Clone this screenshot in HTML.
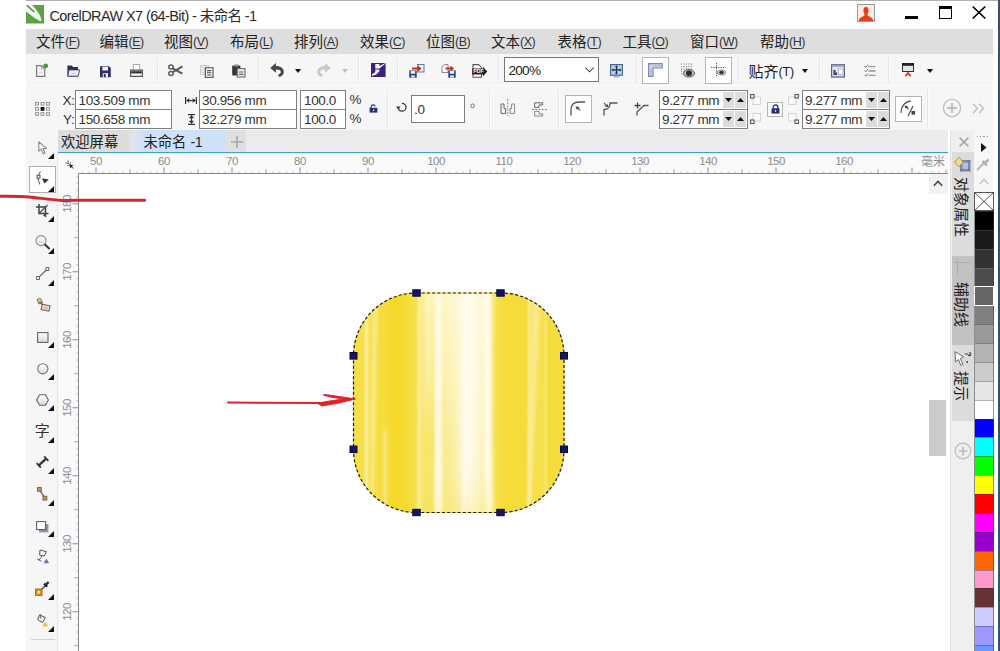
<!DOCTYPE html>
<html lang="zh"><head><meta charset="utf-8"><title>CorelDRAW X7 (64-Bit) - 未命名 -1</title>
<style>
html,body{margin:0;padding:0;}
body{width:1000px;height:651px;overflow:hidden;background:#fff;position:relative;font-family:"Liberation Sans","Noto Sans CJK SC",sans-serif;color:#1a1a1a;}
.a{position:absolute;}
.t{position:absolute;white-space:nowrap;line-height:1;}
svg{position:absolute;overflow:visible;}
.m{top:34.5px;font-size:14.5px;color:#222;}
.m i{font-style:normal;font-size:12.5px;position:relative;top:-1px;letter-spacing:-0.45px;color:#333;}
.m u{text-decoration-thickness:1px;text-underline-offset:1.5px;}
.box{position:absolute;background:#fff;border:1px solid #7f7f7f;box-sizing:border-box;}
.v{font-size:13.5px;color:#333;letter-spacing:-0.35px;}
.sep{position:absolute;width:1px;background:#e6e6e6;border-right:1px solid #fcfcfc;}
.sel{position:absolute;background:#fff;border:1px solid #b4b4b4;box-sizing:border-box;}
.spin{position:absolute;background:#dcdcdc;}
.fly{position:absolute;width:0;height:0;border-left:6.5px solid transparent;border-bottom:6.5px solid #111;}
.rl{font-size:11.5px;color:#8c8c8c;letter-spacing:-0.5px;}
.vl{font-size:11.5px;color:#8c8c8c;letter-spacing:-0.5px;transform:rotate(-90deg);transform-origin:0 0;}
.dk{font-size:15px;color:#222;writing-mode:vertical-rl;text-orientation:sideways;}
</style></head><body>
<div class="a" style="left:26px;top:0;width:973px;height:1px;background:#b0b0b0"></div>
<div class="a" style="left:26px;top:29px;width:967px;height:25px;background:#dedede"></div>
<div class="a" style="left:26px;top:54px;width:967px;height:77px;background:#f6f6f6"></div>
<div class="a" style="left:26px;top:85px;width:967px;height:1px;background:#fcfcfc"></div>
<div class="a" style="left:26px;top:130px;width:32px;height:521px;background:#f6f6f6"></div>
<div class="a" style="left:58px;top:130px;width:890px;height:22px;background:#ebebeb"></div>
<div class="a" style="left:948px;top:130px;width:45px;height:521px;background:#efefef"></div>
<div class="a" style="left:998.3px;top:0;width:1.7px;height:651px;background:linear-gradient(180deg,#414e62 0,#34526c 200px,#2f566e 100%)"></div>
<svg style="left:26px;top:5px" width="18" height="18.5" viewBox="0 0 18 18.5"><rect width="18" height="18.5" fill="#5ba241"/><path d="M0 0 L6.2 0 L10 4.5 L14 10.5 L15.6 15.2 L14.2 16.2 L8 12.5 L0 6.4Z" fill="#f4fbf0"/><path d="M1.2 0.6 L8 6.8" stroke="#5d7a4c" stroke-width="1.4" stroke-linecap="round"/></svg>
<div class="t" style="left:49.5px;top:8.5px;font-size:14.5px;letter-spacing:-0.6px;color:#2a2a2a">CorelDRAW X7 (64-Bit) - 未命名 -1</div>
<svg style="left:857px;top:4px" width="18" height="18" viewBox="0 0 18 18"><rect x="0.5" y="0.5" width="17" height="17" fill="#fbe9e4" stroke="#9a9a9a"/><ellipse cx="9" cy="6.4" rx="2.6" ry="3.4" fill="#e2401c"/><path d="M1.5 17 C2.5 13 5.8 12.8 7.4 11.4 L7.4 8.5 L10.6 8.5 L10.6 11.4 C12.2 12.8 15.5 13 16.5 17Z" fill="#e2401c"/></svg>
<div class="a" style="left:904.5px;top:15.5px;width:13px;height:3px;background:#000"></div>
<div class="a" style="left:939px;top:6px;width:12.5px;height:12.5px;border:1px solid #000;border-top:3px solid #000;box-sizing:border-box"></div>
<svg style="left:972px;top:6px" width="14" height="13" viewBox="0 0 14 13"><path d="M0.7 0.5 L13.3 12.5 M13.3 0.5 L0.7 12.5" stroke="#000" stroke-width="1.7"/></svg>
<div class="t m" style="left:36px">文件<i>(<u>F</u>)</i></div>
<div class="t m" style="left:99.5px">编辑<i>(<u>E</u>)</i></div>
<div class="t m" style="left:164px">视图<i>(<u>V</u>)</i></div>
<div class="t m" style="left:230px">布局<i>(<u>L</u>)</i></div>
<div class="t m" style="left:294px">排列<i>(<u>A</u>)</i></div>
<div class="t m" style="left:360px">效果<i>(<u>C</u>)</i></div>
<div class="t m" style="left:426px">位图<i>(<u>B</u>)</i></div>
<div class="t m" style="left:491px">文本<i>(<u>X</u>)</i></div>
<div class="t m" style="left:557.5px">表格<i>(<u>T</u>)</i></div>
<div class="t m" style="left:622.5px">工具<i>(<u>O</u>)</i></div>
<div class="t m" style="left:690px">窗口<i>(<u>W</u>)</i></div>
<div class="t m" style="left:760px">帮助<i>(<u>H</u>)</i></div>
<!-- standard toolbar -->
<svg style="left:36px;top:63px" width="13" height="14" viewBox="0 0 13 14"><path d="M0.6 2.6 L5.6 2.6 L8.8 5.6 L8.8 13.4 L0.6 13.4Z" fill="#f8f8f8" stroke="#7a7a7a" stroke-width="1.2"/><path d="M5.4 2.8 L5.4 5.8 L8.6 5.8" fill="none" stroke="#9a9a9a" stroke-width="0.9"/><path d="M2.4 9.8 H6.8" stroke="#c8c8c8" stroke-width="0.9"/><circle cx="9.7" cy="2.8" r="2.4" fill="#3f9a3a"/></svg>
<svg style="left:67px;top:65px" width="13" height="12" viewBox="0 0 13 12"><path d="M0.4 0.4 L4.8 0.4 L6 1.9 L11 1.9 L11 11.4 L0.4 11.4Z" fill="#2a3052"/><path d="M2 4.9 L12.7 4.9 L11 11.2 L0.8 11.2Z" fill="#eceef2" stroke="#3a3f58" stroke-width="0.9"/><path d="M4 8.4 H9" stroke="#c4c8d2" stroke-width="0.9"/></svg>
<svg style="left:100px;top:65.5px" width="11" height="11.5" viewBox="0 0 11 11.5"><path d="M0 0.3 L9 0.3 L10.8 2 L10.8 11.2 L0 11.2Z" fill="#2c315e"/><rect x="2.4" y="0.8" width="5.6" height="3.7" fill="#f4f5fa"/><rect x="2.8" y="7.2" width="5.2" height="4" fill="#f4f5fa"/><rect x="3.8" y="8" width="1.9" height="3.2" fill="#2c315e"/></svg>
<svg style="left:130px;top:64px" width="13" height="13" viewBox="0 0 13 13"><rect x="3.3" y="0.5" width="6.4" height="6.5" fill="#fff" stroke="#a2a2a2" stroke-width="0.9"/><path d="M0.6 6.2 L12.4 6.2 L12.4 12.4 L0.6 12.4Z" fill="#f6f6f6" stroke="#555" stroke-width="1.2"/><rect x="1.2" y="7.2" width="10.6" height="2.2" fill="#2e2e2e"/></svg>
<div class="sep" style="left:157px;top:57px;height:26px"></div>
<svg style="left:168px;top:63.5px" width="15" height="12.5" viewBox="0 0 15 12.5"><ellipse cx="3" cy="3" rx="2.2" ry="2" fill="none" stroke="#5a5a5a" stroke-width="1.5"/><ellipse cx="3" cy="9.4" rx="2.2" ry="2" fill="none" stroke="#5a5a5a" stroke-width="1.5"/><path d="M4.6 4.3 L14.4 9.6 M4.6 8.2 L14.4 2.4" stroke="#555" stroke-width="1.9"/></svg>
<svg style="left:200px;top:64.5px" width="14" height="13" viewBox="0 0 14 13"><rect x="0.7" y="0.6" width="7.6" height="8.6" fill="#f7f7f7" stroke="#bdbdbd" stroke-width="0.9"/><path d="M2 2.8 H7 M2 5 H5 M2 7.2 H5" stroke="#c8c8c8" stroke-width="0.9"/><rect x="5.4" y="2.8" width="7.6" height="9.6" fill="#fff" stroke="#5a5a5a" stroke-width="1.2"/><path d="M7 5.6 H11.4 M7 7.8 H11.4 M7 10 H11.4" stroke="#4a4a4a" stroke-width="1.1"/></svg>
<svg style="left:232px;top:64px" width="14" height="14" viewBox="0 0 14 14"><rect x="0.2" y="1.6" width="8.2" height="10" rx="0.8" fill="#3b3331"/><rect x="2" y="0.4" width="4.6" height="2.4" rx="0.8" fill="#8d8682"/><rect x="5.2" y="4.6" width="7.8" height="8.4" fill="#ececf0" stroke="#6a6a6a" stroke-width="1.1"/><path d="M6.8 8 H11.4 M6.8 10.4 H11.4" stroke="#666" stroke-width="1.1"/></svg>
<div class="sep" style="left:258px;top:57px;height:26px"></div>
<svg style="left:270.3px;top:63px" width="14" height="14" viewBox="0 0 14 14"><path d="M0.2 4.9 L5.9 0 L5.9 2.9 C11 2.9 13.8 5.6 13.8 9 C13.8 11.6 12 13.4 9 14 L8 11.6 C10 11.2 10.8 10.2 10.8 9 C10.8 7.4 9.2 6.6 5.9 6.6 L5.9 9.8Z" fill="#474747"/></svg>
<svg style="left:295px;top:69px" width="6" height="4" viewBox="0 0 6 4"><path d="M0 0 H6 L3 4Z" fill="#111"/></svg>
<svg style="left:316.8px;top:63px" width="14" height="14" viewBox="0 0 14 14"><path d="M13.8 4.9 L8.1 0 L8.1 2.9 C3 2.9 0.2 5.6 0.2 9 C0.2 11.6 2 13.4 5 14 L6 11.6 C4 11.2 3.2 10.2 3.2 9 C3.2 7.4 4.8 6.6 8.1 6.6 L8.1 9.8Z" fill="#c8c8c8"/></svg>
<svg style="left:342px;top:69px" width="6" height="4" viewBox="0 0 6 4"><path d="M0 0 H6 L3 4Z" fill="#bdbdbd"/></svg>
<div class="sep" style="left:358px;top:57px;height:26px"></div>
<svg style="left:370.6px;top:62.8px" width="14.6" height="14" viewBox="0 0 14.6 14"><rect width="14.6" height="14" fill="#35237f"/><path d="M4.3 1 L8.4 1 L8.4 3.2 L13.6 0.2 L14.4 0.6 L8.4 5.4 L4.3 5.4Z" fill="#fbf8ff"/><path d="M4.3 6.4 L8.4 6.4 L8.4 8.2 L5.4 11.6 L1 12.9 L0.8 11.4 L4.3 9Z" fill="#f3eeff"/></svg>
<div class="sep" style="left:397px;top:57px;height:26px"></div>
<svg style="left:408.5px;top:63.5px" width="16" height="14" viewBox="0 0 16 14"><rect x="8.5" y="0.5" width="6.5" height="7.5" fill="#eef3f6" stroke="#4d7f9a" stroke-width="1"/><path d="M3 3.6 H9 L9 1.6 L12.5 4.5 L9 7.4 L9 5.4 H3Z" fill="#cc2b22"/><rect x="0.3" y="6.5" width="7.4" height="7.2" fill="#24406e"/><rect x="1.8" y="7" width="4.4" height="2.8" fill="#eef1f6"/><rect x="2" y="11.3" width="4" height="2.4" fill="#cfd6e4"/></svg>
<svg style="left:440.5px;top:63.5px" width="15" height="14" viewBox="0 0 15 14"><path d="M1 2.5 L3.5 0.5 L7 0.5 L7 8.5 L1 8.5Z" fill="#fbfbfb" stroke="#8a8a8a" stroke-width="1"/><path d="M4.5 3.6 H9.5 L9.5 1.6 L13 4.5 L9.5 7.4 L9.5 5.4 H4.5Z" fill="#cc2b22"/><rect x="7.3" y="6.5" width="7.4" height="7.2" fill="#24406e"/><rect x="8.8" y="7" width="4.4" height="2.8" fill="#eef1f6"/><rect x="9" y="11.3" width="4" height="2.4" fill="#cfd6e4"/></svg>
<svg style="left:472px;top:63.5px" width="16" height="14" viewBox="0 0 16 14"><path d="M1 0.6 L6.5 0.6 L9.5 3.4 L9.5 13.2 L1 13.2Z" fill="#fff" stroke="#555" stroke-width="1.1"/><path d="M0.2 4.6 H11 L11 2.8 L15.3 7.5 L11 12.2 L11 10.4 H0.2Z" fill="#222"/><text x="1.2" y="9.4" font-size="5.2" font-weight="bold" fill="#fff" font-family="Liberation Sans, sans-serif">PDF</text></svg>
<div class="sep" style="left:498px;top:57px;height:26px"></div>
<div class="box" style="left:504px;top:57px;width:95px;height:24.5px;border-color:#767676"></div>
<div class="t" style="left:508.5px;top:63.5px;font-size:13.6px;letter-spacing:-0.75px;color:#222">200%</div>
<svg style="left:585px;top:67px" width="9" height="6" viewBox="0 0 9 6"><path d="M0.4 0.7 L4.5 4.8 L8.6 0.7" fill="none" stroke="#444" stroke-width="1.1"/></svg>
<svg style="left:610px;top:63.5px" width="13" height="14" viewBox="0 0 13 14"><rect x="0.6" y="0.6" width="11.8" height="10.6" fill="#b9d2ea" stroke="#3b5f8a" stroke-width="1.1"/><path d="M2.3 5.9 H10.7 M6.5 2 V9.8" stroke="#1c2d4a" stroke-width="1.3"/><path d="M6.5 1.2 L8 3 H5Z M6.5 10.6 L8 8.8 H5Z M1.6 5.9 L3.4 4.4 V7.4Z M11.4 5.9 L9.6 4.4 V7.4Z" fill="#1c2d4a"/><rect x="3.5" y="12" width="6" height="1.4" fill="#9db4cc"/></svg>
<div class="sep" style="left:636px;top:57px;height:26px"></div>
<div class="sel" style="left:642px;top:57px;width:27px;height:27px"></div>
<svg style="left:648px;top:63px" width="15" height="14" viewBox="0 0 15 14"><path d="M0.6 0.6 H14.2 V5 H5 V13.4 H0.6Z" fill="#c9d3e6" stroke="#7a86a8" stroke-width="1.1"/><path d="M6 2 V3.4 M8 2 V3.4 M10 2 V3.4 M12 2 V3.4 M2 6.5 H3.4 M2 8.5 H3.4 M2 10.5 H3.4" stroke="#8d98b6" stroke-width="0.7"/></svg>
<svg style="left:680px;top:63px" width="15" height="15" viewBox="0 0 15 15"><path d="M1 1 H12 M1 3.5 H12 M1 6 H12 M1 8.5 H5 M1 11 H4" stroke="#9a9a9a" stroke-width="0.9" stroke-dasharray="1 1.4"/><path d="M1.5 0.5 V12 M4 0.5 V12 M6.5 0.5 V7 M9 0.5 V7 M11.5 0.5 V7" stroke="#9a9a9a" stroke-width="0.9" stroke-dasharray="1 1.4"/><ellipse cx="9" cy="10.3" rx="5.5" ry="3.7" fill="#c4c4c4" stroke="#555" stroke-width="1"/><ellipse cx="9" cy="10.3" rx="3" ry="2.7" fill="#2a2a2a"/></svg>
<div class="sel" style="left:705px;top:57px;width:27px;height:27px"></div>
<svg style="left:711px;top:63px" width="16" height="15" viewBox="0 0 16 15"><path d="M0 4.5 H15 M5.5 0 V14" stroke="#555" stroke-width="1" stroke-dasharray="1.3 1.1"/><ellipse cx="10.5" cy="9.5" rx="4.2" ry="2.5" fill="#cfcfcf" stroke="#666" stroke-width="0.8"/><ellipse cx="10.5" cy="9.5" rx="2.2" ry="1.7" fill="#333"/></svg>
<div class="sep" style="left:738px;top:57px;height:26px"></div>
<div class="t" style="left:748.5px;top:63.5px;font-size:15px;color:#1c1c1c">贴齐<span style="font-size:12.5px;position:relative;top:-1px;letter-spacing:-0.2px">(T)</span></div>
<svg style="left:802px;top:69px" width="6" height="4" viewBox="0 0 6 4"><path d="M0 0 H6 L3 4Z" fill="#111"/></svg>
<div class="sep" style="left:819px;top:57px;height:26px"></div>
<svg style="left:831px;top:63.5px" width="14" height="14" viewBox="0 0 14 14"><rect x="0.6" y="0.6" width="12.8" height="12.4" fill="#dfe3ee" stroke="#5a5f86" stroke-width="1.2"/><rect x="0.6" y="0.6" width="12.8" height="2.2" fill="#9aa0bd"/><path d="M2.5 11 V6 H4.5 V8.5 H6 V11Z" fill="#3a3f78"/><rect x="7.5" y="5" width="4.5" height="5.5" fill="#fff" stroke="#9aa0bd" stroke-width="0.7"/></svg>
<svg style="left:864px;top:63.5px" width="12" height="13" viewBox="0 0 12 13"><path d="M0.5 2 L1.8 3.4 L4 0.6 M0.5 6.4 L1.8 7.8 L4 5 M0.5 10.8 L1.8 12.2 L4 9.4" fill="none" stroke="#777" stroke-width="1"/><path d="M4.5 2.6 H11.5 M4.5 7 H11.5 M4.5 11.4 H11.5" stroke="#999" stroke-width="1.4"/></svg>
<div class="sep" style="left:888px;top:57px;height:26px"></div>
<svg style="left:902px;top:63px" width="12" height="14" viewBox="0 0 12 14"><rect x="0.5" y="0.5" width="11" height="8" fill="#e3e4ee" stroke="#333" stroke-width="1"/><rect x="0" y="0" width="12" height="2.8" fill="#222"/><path d="M6 8.4 L9.6 13.2 L7.6 13.2 L6 11.4 L4.4 13.2 L2.4 13.2Z" fill="#d5341f"/></svg>
<svg style="left:927px;top:69px" width="6" height="4" viewBox="0 0 6 4"><path d="M0 0 H6 L3 4Z" fill="#111"/></svg>
<!-- property bar -->
<svg style="left:35px;top:102px" width="15" height="14" viewBox="0 0 15 14"><g fill="#f6f6f6" stroke="#8c8c8c" stroke-width="0.9"><rect x="0.5" y="0.5" width="3" height="2.6"/><rect x="6" y="0.5" width="3" height="2.6"/><rect x="11.5" y="0.5" width="3" height="2.6"/><rect x="0.5" y="5.6" width="3" height="2.6"/><rect x="11.5" y="5.6" width="3" height="2.6"/><rect x="0.5" y="10.7" width="3" height="2.6"/><rect x="6" y="10.7" width="3" height="2.6"/><rect x="11.5" y="10.7" width="3" height="2.6"/></g><rect x="5.6" y="5" width="3.8" height="3.8" fill="#111"/></svg>
<div class="t v" style="left:62.5px;top:94px">X:</div>
<div class="t v" style="left:63px;top:113px">Y:</div>
<div class="box" style="left:75px;top:90px;width:97px;height:20px"></div>
<div class="box" style="left:75px;top:109px;width:97px;height:20px"></div>
<div class="t v" style="left:78.5px;top:94px">103.509 mm</div>
<div class="t v" style="left:78.5px;top:113px">150.658 mm</div>
<svg style="left:185px;top:97px" width="12" height="7" viewBox="0 0 12 7"><path d="M0.6 0 V7 M11.4 0 V7" stroke="#333" stroke-width="1.2"/><path d="M1.5 3.5 H10.5" stroke="#333" stroke-width="1.1"/><path d="M1.3 3.5 L4.3 1 V6Z M10.7 3.5 L7.7 1 V6Z" fill="#333"/></svg>
<svg style="left:188px;top:114px" width="7" height="11" viewBox="0 0 7 11"><path d="M0 0.6 H7 M0 10.4 H7" stroke="#333" stroke-width="1.2"/><path d="M3.5 1.5 V9.5" stroke="#333" stroke-width="1.1"/><path d="M3.5 1.2 L6.2 4.2 H0.8Z M3.5 9.8 L6.2 6.8 H0.8Z" fill="#333"/></svg>
<div class="box" style="left:199px;top:90px;width:97.5px;height:20px"></div>
<div class="box" style="left:199px;top:109px;width:97.5px;height:20px"></div>
<div class="t v" style="left:202px;top:94px">30.956 mm</div>
<div class="t v" style="left:202px;top:113px">32.279 mm</div>
<div class="box" style="left:300px;top:90px;width:46px;height:20px"></div>
<div class="box" style="left:300px;top:109px;width:46px;height:20px"></div>
<div class="t v" style="left:304px;top:94px">100.0</div>
<div class="t v" style="left:304px;top:113px">100.0</div>
<div class="t v" style="left:349.5px;top:93px;font-size:13.5px;letter-spacing:0;color:#333">%</div>
<div class="t v" style="left:349.5px;top:112px;font-size:13.5px;letter-spacing:0;color:#333">%</div>
<svg style="left:369px;top:104px" width="9" height="9" viewBox="0 0 9 9"><path d="M2.2 4 V2.4 C2.2 0.4 6 0.4 6 2.4" fill="none" stroke="#2b2f77" stroke-width="1.2"/><rect x="0.6" y="3.8" width="7.8" height="4.8" fill="#2b2f77"/><rect x="4" y="5.2" width="1.2" height="2" fill="#c8cbe6"/></svg>
<div class="sep" style="left:387px;top:90px;height:38px"></div>
<svg style="left:396px;top:102px" width="11" height="11" viewBox="0 0 11 11"><path d="M2.2 5.6 A3.9 3.9 0 1 0 6 1.4" fill="none" stroke="#333" stroke-width="1.3"/><path d="M0 4.4 L4.6 4.4 L2.3 7.4Z" fill="#333"/></svg>
<div class="box" style="left:411px;top:95px;width:54px;height:27.5px"></div>
<div class="t v" style="left:414px;top:102.5px">.0</div>
<svg style="left:470px;top:103px" width="6" height="6" viewBox="0 0 6 6"><circle cx="2.6" cy="2.8" r="1.9" fill="none" stroke="#666" stroke-width="0.9"/></svg>
<div class="sep" style="left:488.5px;top:90px;height:38px"></div>
<svg style="left:500px;top:99px" width="16" height="17" viewBox="0 0 16 17"><path d="M7.8 0 V17" stroke="#777" stroke-width="0.9" stroke-dasharray="2 1.2"/><path d="M1 14.4 V5 H4 V9.5 H5.6 V14.4Z" fill="#f4f4f4" stroke="#666" stroke-width="1"/><path d="M14.6 14.4 V5 H11.6 V9.5 H10 V14.4Z" fill="#f4f4f4" stroke="#888" stroke-width="1"/></svg>
<svg style="left:531.5px;top:102px" width="16" height="15" viewBox="0 0 16 15"><path d="M0 7.5 H16" stroke="#777" stroke-width="0.9" stroke-dasharray="2 1.2"/><path d="M2.6 5.4 V0.8 H10.6 V3 H7 V5.4Z" fill="#f4f4f4" stroke="#666" stroke-width="1"/><path d="M2.6 9.4 V14 H10.6 V11.8 H7 V9.4Z" fill="#f4f4f4" stroke="#888" stroke-width="1"/></svg>
<div class="sep" style="left:558px;top:90px;height:38px"></div>
<div class="sel" style="left:564.5px;top:95px;width:27.5px;height:27.5px"></div>
<svg style="left:570px;top:101px" width="16" height="15" viewBox="0 0 16 15"><path d="M1 14.5 V9 C1 4 4 1 9 1 H15" fill="none" stroke="#555" stroke-width="1.3"/><path d="M5.5 5.5 L9.5 6 L8.6 7 L10.6 9 L9.8 9.8 L7.8 7.8 L6.8 8.8Z" fill="#444"/></svg>
<svg style="left:603px;top:101px" width="15" height="15" viewBox="0 0 15 15"><path d="M1 14.5 V8.5 C5 8.5 7 6 7 2 H14.5" fill="none" stroke="#555" stroke-width="1.3"/><path d="M5.6 6.2 L1.8 5.6 L2.7 4.7 L0.6 2.6 L1.4 1.8 L3.5 3.9 L4.4 3Z" fill="#444"/></svg>
<svg style="left:634px;top:101px" width="15" height="15" viewBox="0 0 15 15"><path d="M3 14.5 V11 L10 4.5 H14.5" fill="none" stroke="#555" stroke-width="1.3"/><path d="M0.5 4.5 H6.5 M3.5 1.5 V7.5" stroke="#444" stroke-width="1.3"/></svg>
<div class="box" style="left:659px;top:90px;width:88.5px;height:20px"></div>
<div class="box" style="left:659px;top:109px;width:88.5px;height:20px"></div>
<div class="t v" style="left:662px;top:94px">9.277 mm</div>
<div class="t v" style="left:662px;top:113px">9.277 mm</div>
<div class="spin" style="left:723px;top:92px;width:10.5px;height:16px"></div><div class="spin" style="left:735px;top:92px;width:10.5px;height:16px"></div>
<div class="spin" style="left:723px;top:111px;width:10.5px;height:16px"></div><div class="spin" style="left:735px;top:111px;width:10.5px;height:16px"></div>
<svg style="left:725px;top:98px" width="7" height="4" viewBox="0 0 7 4"><path d="M0 0 H7 L3.5 4Z" fill="#111"/></svg><svg style="left:737px;top:98px" width="7" height="4" viewBox="0 0 7 4"><path d="M0 4 H7 L3.5 0Z" fill="#111"/></svg>
<svg style="left:725px;top:117px" width="7" height="4" viewBox="0 0 7 4"><path d="M0 0 H7 L3.5 4Z" fill="#111"/></svg><svg style="left:737px;top:117px" width="7" height="4" viewBox="0 0 7 4"><path d="M0 4 H7 L3.5 0Z" fill="#111"/></svg>
<svg style="left:750px;top:94px" width="11" height="11" viewBox="0 0 11 11"><rect x="3" y="3" width="7.5" height="7.5" fill="#fafafa" stroke="#cfcfcf" stroke-width="0.9"/><rect x="0.6" y="0.6" width="3.4" height="3.4" fill="#fff" stroke="#444" stroke-width="1"/></svg>
<svg style="left:750px;top:113px" width="11" height="11" viewBox="0 0 11 11"><rect x="3" y="0.5" width="7.5" height="7.5" fill="#fafafa" stroke="#cfcfcf" stroke-width="0.9"/><rect x="0.6" y="7" width="3.4" height="3.4" fill="#fff" stroke="#444" stroke-width="1"/></svg>
<div class="sel" style="left:767px;top:101.5px;width:16px;height:15px"></div>
<svg style="left:770.5px;top:104px" width="9" height="10" viewBox="0 0 9 10"><path d="M2.2 4.4 V2.8 C2.2 0.4 6.8 0.4 6.8 2.8 V4.4" fill="none" stroke="#2b2f77" stroke-width="1.3"/><rect x="0.5" y="4.2" width="8" height="5.4" fill="#2b2f77"/><rect x="4" y="5.8" width="1.1" height="2.2" fill="#c8cbe6"/></svg>
<svg style="left:788px;top:94px" width="11" height="11" viewBox="0 0 11 11"><rect x="0.5" y="3" width="7.5" height="7.5" fill="#fafafa" stroke="#cfcfcf" stroke-width="0.9"/><rect x="7" y="0.6" width="3.4" height="3.4" fill="#fff" stroke="#444" stroke-width="1"/></svg>
<svg style="left:788px;top:113px" width="11" height="11" viewBox="0 0 11 11"><rect x="0.5" y="0.5" width="7.5" height="7.5" fill="#fafafa" stroke="#cfcfcf" stroke-width="0.9"/><rect x="7" y="7" width="3.4" height="3.4" fill="#fff" stroke="#444" stroke-width="1"/></svg>
<div class="box" style="left:802px;top:90px;width:88px;height:20px"></div>
<div class="box" style="left:802px;top:109px;width:88px;height:20px"></div>
<div class="t v" style="left:805px;top:94px">9.277 mm</div>
<div class="t v" style="left:805px;top:113px">9.277 mm</div>
<div class="spin" style="left:866px;top:92px;width:10.5px;height:16px"></div><div class="spin" style="left:878px;top:92px;width:10.5px;height:16px"></div>
<div class="spin" style="left:866px;top:111px;width:10.5px;height:16px"></div><div class="spin" style="left:878px;top:111px;width:10.5px;height:16px"></div>
<svg style="left:868px;top:98px" width="7" height="4" viewBox="0 0 7 4"><path d="M0 0 H7 L3.5 4Z" fill="#111"/></svg><svg style="left:880px;top:98px" width="7" height="4" viewBox="0 0 7 4"><path d="M0 4 H7 L3.5 0Z" fill="#111"/></svg>
<svg style="left:868px;top:117px" width="7" height="4" viewBox="0 0 7 4"><path d="M0 0 H7 L3.5 4Z" fill="#111"/></svg><svg style="left:880px;top:117px" width="7" height="4" viewBox="0 0 7 4"><path d="M0 4 H7 L3.5 0Z" fill="#111"/></svg>
<div class="sel" style="left:895px;top:95.5px;width:27px;height:26.5px"></div>
<svg style="left:900px;top:100px" width="17" height="17" viewBox="0 0 17 17"><path d="M1 13 C1 6 5 1.5 11 1.2" fill="none" stroke="#555" stroke-width="1.2"/><path d="M8 16 L13 6" stroke="#555" stroke-width="1.2"/><path d="M4.5 5.5 L8 6.2 L7.2 7 L8.8 8.6 L8 9.4 L6.4 7.8 L5.6 8.6Z" fill="#333"/><rect x="11.5" y="11" width="3.6" height="3.6" fill="#444"/></svg>
<div class="sep" style="left:927px;top:90px;height:38px"></div>
<svg style="left:942px;top:98px" width="20" height="20" viewBox="0 0 20 20"><circle cx="10" cy="10" r="8.6" fill="none" stroke="#bdbdbd" stroke-width="1.3"/><path d="M5 10 H15 M10 5 V15" stroke="#bdbdbd" stroke-width="1.8"/></svg>
<svg style="left:972px;top:103px" width="13" height="11" viewBox="0 0 13 11"><path d="M1 0.8 L5.5 5.5 L1 10.2 M7 0.8 L11.5 5.5 L7 10.2" fill="none" stroke="#bdbdbd" stroke-width="1.3"/></svg>
<!-- tabs -->
<div class="a" style="left:58px;top:130px;width:69px;height:22px;background:#dcdcdc"></div>
<div class="a" style="left:127px;top:130px;width:97.5px;height:22px;background:linear-gradient(90deg,#dedede 0,#e2e4e8 6px,#cfe1f8 15px)"></div>
<div class="a" style="left:224.5px;top:130px;width:21.5px;height:22px;background:#e0e0e0"></div>
<div class="t" style="left:61px;top:135px;font-size:14.3px;color:#222">欢迎屏幕</div>
<div class="t" style="left:143.5px;top:135px;font-size:14.3px;color:#222">未命名 <span style="font-size:14.3px;letter-spacing:-0.3px">-1</span></div>
<svg style="left:230.5px;top:136px" width="12" height="12" viewBox="0 0 12 12"><path d="M0 6 H12 M6 0 V12" stroke="#a9a9a9" stroke-width="1.7"/></svg>
<div class="a" style="left:58px;top:151.5px;width:890px;height:1.6px;background:#3fa4b8"></div>
<div class="a" style="left:58px;top:153.1px;width:890px;height:1px;background:#def4f6"></div>
<!-- rulers -->
<div class="a" style="left:58px;top:154px;width:890px;height:19px;background:#fafafa"></div>
<div class="a" style="left:58px;top:173px;width:21px;height:478px;background:#fafafa"></div>
<div class="a" style="left:57px;top:153px;width:1px;height:498px;background:#e6e6e6"></div>
<svg style="left:79px;top:153.5px" width="869" height="20" viewBox="79 153.5 869 20"><defs><pattern id="ht" x="95.5" y="153.5" width="68" height="20" patternUnits="userSpaceOnUse"><path d="M0.5 13.5 V20" stroke="#8c8c8c" stroke-width="1"/><path d="M34.5 15.5 V20" stroke="#9c9c9c" stroke-width="1"/><path d="M7.3 17.5 V20" stroke="#b8b8b8" stroke-width="1"/><path d="M14.1 17.5 V20" stroke="#b8b8b8" stroke-width="1"/><path d="M20.9 17.5 V20" stroke="#b8b8b8" stroke-width="1"/><path d="M27.7 17.5 V20" stroke="#b8b8b8" stroke-width="1"/><path d="M41.3 17.5 V20" stroke="#b8b8b8" stroke-width="1"/><path d="M48.1 17.5 V20" stroke="#b8b8b8" stroke-width="1"/><path d="M54.9 17.5 V20" stroke="#b8b8b8" stroke-width="1"/><path d="M61.7 17.5 V20" stroke="#b8b8b8" stroke-width="1"/></pattern></defs><rect x="79" y="153.5" width="869" height="20" fill="url(#ht)"/></svg>
<svg style="left:58px;top:173px" width="21" height="478" viewBox="58 173 21 478"><defs><pattern id="vt" x="58" y="203.25" width="21" height="68" patternUnits="userSpaceOnUse"><path d="M14.5 0.5 H21" stroke="#8c8c8c" stroke-width="1"/><path d="M16.5 34.5 H21" stroke="#9c9c9c" stroke-width="1"/><path d="M18.5 7.3 H21" stroke="#b8b8b8" stroke-width="1"/><path d="M18.5 14.1 H21" stroke="#b8b8b8" stroke-width="1"/><path d="M18.5 20.9 H21" stroke="#b8b8b8" stroke-width="1"/><path d="M18.5 27.7 H21" stroke="#b8b8b8" stroke-width="1"/><path d="M18.5 41.3 H21" stroke="#b8b8b8" stroke-width="1"/><path d="M18.5 48.1 H21" stroke="#b8b8b8" stroke-width="1"/><path d="M18.5 54.9 H21" stroke="#b8b8b8" stroke-width="1"/><path d="M18.5 61.7 H21" stroke="#b8b8b8" stroke-width="1"/></pattern></defs><rect x="58" y="174" width="21" height="477" fill="url(#vt)"/></svg>
<div class="a" style="left:79px;top:173px;width:869px;height:1px;background:#8a8a8a"></div>
<div class="a" style="left:78px;top:173px;width:1px;height:478px;background:#8a8a8a"></div>
<div class="t rl" style="left:86.0px;top:155.5px;width:20px;text-align:center">50</div>
<div class="t rl" style="left:154.0px;top:155.5px;width:20px;text-align:center">60</div>
<div class="t rl" style="left:222.0px;top:155.5px;width:20px;text-align:center">70</div>
<div class="t rl" style="left:290.0px;top:155.5px;width:20px;text-align:center">80</div>
<div class="t rl" style="left:358.0px;top:155.5px;width:20px;text-align:center">90</div>
<div class="t rl" style="left:426.0px;top:155.5px;width:20px;text-align:center">100</div>
<div class="t rl" style="left:494.0px;top:155.5px;width:20px;text-align:center">110</div>
<div class="t rl" style="left:562.0px;top:155.5px;width:20px;text-align:center">120</div>
<div class="t rl" style="left:630.0px;top:155.5px;width:20px;text-align:center">130</div>
<div class="t rl" style="left:698.0px;top:155.5px;width:20px;text-align:center">140</div>
<div class="t rl" style="left:766.0px;top:155.5px;width:20px;text-align:center">150</div>
<div class="t rl" style="left:834.0px;top:155.5px;width:20px;text-align:center">160</div>
<div class="t" style="left:921px;top:155.5px;font-size:12px;color:#909090">毫米</div>
<div class="t vl" style="left:62px;top:213.5px;width:20px;text-align:center">180</div>
<div class="t vl" style="left:62px;top:281.5px;width:20px;text-align:center">170</div>
<div class="t vl" style="left:62px;top:349.5px;width:20px;text-align:center">160</div>
<div class="t vl" style="left:62px;top:417.5px;width:20px;text-align:center">150</div>
<div class="t vl" style="left:62px;top:485.5px;width:20px;text-align:center">140</div>
<div class="t vl" style="left:62px;top:553.5px;width:20px;text-align:center">130</div>
<div class="t vl" style="left:62px;top:621.5px;width:20px;text-align:center">120</div>
<svg style="left:65px;top:160px" width="9" height="9" viewBox="0 0 9 9"><path d="M0.5 3 H6 M3 0.5 V6" stroke="#333" stroke-width="1" stroke-dasharray="1.2 1"/><path d="M4 4 L8.5 5.6 L6.8 6.4 L8.6 8.2 L8 8.8 L6.2 7 L5.4 8.6Z" fill="#222"/></svg>
<!-- scrollbar -->
<div class="a" style="left:929px;top:174px;width:19px;height:477px;background:#fff"></div>
<div class="a" style="left:929px;top:174px;width:19px;height:20px;background:#f2f2f2"></div>
<svg style="left:933px;top:180px" width="10" height="7" viewBox="0 0 10 7"><path d="M0.8 5.8 L5 1.5 L9.2 5.8" fill="none" stroke="#444" stroke-width="1.6"/></svg>
<div class="a" style="left:929px;top:399.5px;width:17px;height:56px;background:#cbcbcb"></div>
<!-- toolbox -->
<svg style="left:38px;top:140.5px" width="10" height="14" viewBox="0 0 10 14"><path d="M0.8 0.8 L0.8 10.2 L3.2 8.2 L5.2 12.8 L7 12 L5 7.6 L8.4 7.4Z" fill="#fafafa" stroke="#8a8a8a" stroke-width="1.1" stroke-linejoin="round"/></svg>
<div class="fly" style="left:48px;top:153px"></div>
<div class="sel" style="left:29px;top:165.5px;width:27px;height:27px;border-color:#aeaeae"></div>
<svg style="left:36px;top:171px" width="14" height="15" viewBox="0 0 14 15"><path d="M4.5 0.5 C1.5 4.5 1.5 9 4 13.5" fill="none" stroke="#666" stroke-width="1.1"/><rect x="1" y="4.2" width="3" height="3" fill="#fff" stroke="#444" stroke-width="0.9"/><path d="M6 7.2 L12.8 8.6 L8.4 12.6Z" fill="#333"/></svg>
<div class="fly" style="left:48px;top:186px"></div>
<svg style="left:36px;top:203.5px" width="13" height="13" viewBox="0 0 13 13"><path d="M0 3 H9.5 V13 M3 0 V9.5 H12.5" fill="none" stroke="#444" stroke-width="1.5"/><path d="M3.5 9 L11.5 1" stroke="#444" stroke-width="1.1"/><path d="M7 11.5 L9.5 9 L9.5 12.8Z" fill="#444"/></svg>
<div class="fly" style="left:48px;top:216px"></div>
<svg style="left:34.5px;top:235px" width="16" height="15" viewBox="0 0 16 15"><circle cx="6" cy="5.6" r="5" fill="#f4f6f8" stroke="#8a8a8a" stroke-width="1.1"/><path d="M3.2 6.2 C5 7.6 7 7.6 8.8 6.2" fill="none" stroke="#b5b5b5" stroke-width="0.9"/><path d="M9.6 9.2 L14.6 14" stroke="#333" stroke-width="2"/></svg>
<div class="fly" style="left:48px;top:248px"></div>
<svg style="left:36px;top:267px" width="14" height="13" viewBox="0 0 14 13"><path d="M2.4 10.6 L11 2.4" stroke="#555" stroke-width="1.2"/><rect x="0.6" y="9.6" width="2.8" height="2.8" fill="#fff" stroke="#555" stroke-width="0.9"/><rect x="10" y="0.6" width="2.8" height="2.8" fill="#fff" stroke="#555" stroke-width="0.9"/></svg>
<div class="fly" style="left:48px;top:279.5px"></div>
<svg style="left:35.5px;top:298px" width="15" height="14" viewBox="0 0 15 14"><path d="M1 1.5 L4.5 0.5 L6.5 4.5 L3 6Z" fill="#e6dccb" stroke="#7a6548" stroke-width="1"/><path d="M3.5 3.5 L8 8.5" stroke="#7a6548" stroke-width="1.4"/><rect x="5.6" y="7" width="8" height="5.4" fill="#efe7d8" stroke="#7a6548" stroke-width="1.1" transform="rotate(12 9.6 9.7)"/><rect x="7.5" y="8.6" width="4.6" height="2.2" fill="#c9b998" transform="rotate(12 9.6 9.7)"/></svg>
<svg style="left:37px;top:332px" width="12" height="11" viewBox="0 0 12 11"><defs><linearGradient id="gr1" x1="0" y1="0" x2="0" y2="1"><stop offset="0" stop-color="#fff"/><stop offset="1" stop-color="#d8d8d8"/></linearGradient></defs><rect x="0.6" y="0.6" width="10.4" height="9.8" fill="url(#gr1)" stroke="#666" stroke-width="1.1"/></svg>
<div class="fly" style="left:48px;top:342px"></div>
<svg style="left:37px;top:363px" width="12" height="12" viewBox="0 0 12 12"><circle cx="5.8" cy="5.8" r="5.1" fill="url(#gr1)" stroke="#777" stroke-width="1.1"/></svg>
<div class="fly" style="left:48px;top:373.5px"></div>
<svg style="left:36px;top:393.5px" width="13" height="12" viewBox="0 0 13 12"><path d="M3.6 0.7 L9.4 0.7 L12.4 6 L9.4 11.3 L3.6 11.3 L0.6 6Z" fill="url(#gr1)" stroke="#666" stroke-width="1.1"/></svg>
<div class="fly" style="left:48px;top:405px"></div>
<div class="t" style="left:34.8px;top:422.5px;font-size:15px;color:#333">字</div>
<div class="fly" style="left:48px;top:436.5px"></div>
<svg style="left:36px;top:456px" width="13" height="12" viewBox="0 0 13 12"><path d="M2.6 9.6 L10.4 2.4" stroke="#333" stroke-width="2.2"/><path d="M0.6 7.2 L4.8 11.6 M8.2 0.4 L12.4 4.8" stroke="#333" stroke-width="1.7"/></svg>
<div class="fly" style="left:48px;top:468px"></div>
<svg style="left:37px;top:486.5px" width="11" height="14" viewBox="0 0 11 14"><path d="M2.4 2.6 L8 11" stroke="#555" stroke-width="1.2"/><rect x="0.6" y="0.6" width="3.6" height="3.6" fill="#c99a5a" stroke="#6b5232" stroke-width="0.9"/><rect x="6" y="9.2" width="3.8" height="3.8" fill="#c99a5a" stroke="#6b5232" stroke-width="0.9"/></svg>
<div class="fly" style="left:48px;top:499.5px"></div>
<svg style="left:35.5px;top:520.5px" width="13" height="12" viewBox="0 0 13 12"><rect x="3" y="3" width="9.4" height="8.4" fill="#8d93a8"/><rect x="0.6" y="0.6" width="9" height="8" fill="#fff" stroke="#555" stroke-width="1"/></svg>
<div class="fly" style="left:48px;top:531px"></div>
<svg style="left:35.5px;top:549px" width="14" height="15" viewBox="0 0 14 15"><path d="M4 1 L10.5 2.6 L8.2 7.2 L3.6 6Z" fill="#eef1f4" stroke="#555" stroke-width="1"/><path d="M6 6.6 L3.2 11 M1 10 L5.6 12.4" stroke="#666" stroke-width="1"/><path d="M7.6 14.2 L13.2 14.2 L10.4 9.4Z" fill="#6d74a8"/></svg>
<svg style="left:34.5px;top:581px" width="15" height="15" viewBox="0 0 15 15"><path d="M5.5 9.5 L10.5 4.5" stroke="#555" stroke-width="1.6"/><path d="M9 2.6 L12.2 5.8 M10 4.6 L13.6 1" stroke="#223" stroke-width="2.2"/><rect x="0.6" y="8" width="6.4" height="6.4" fill="#e08a1c" stroke="#8a5a1a" stroke-width="0.8"/><rect x="2.4" y="9.8" width="2.8" height="2.8" fill="#f6dcae"/></svg>
<div class="fly" style="left:48px;top:594px"></div>
<svg style="left:37px;top:614px" width="12" height="13" viewBox="0 0 12 13"><path d="M2.6 0.8 L8.4 3.6 L5.4 8.6 L0.6 5.6Z" fill="#ececec" stroke="#555" stroke-width="1"/><path d="M3.4 0.4 L3.4 4.4" stroke="#555" stroke-width="0.9"/><path d="M5 12.6 L11.4 12.6 L8.2 7.2Z" fill="#e6c84a"/></svg>
<div class="fly" style="left:48px;top:626px"></div>
<div class="a" style="left:31px;top:639px;width:24px;height:1px;background:#d2d2d2"></div>
<!-- dockers -->
<div class="a" style="left:948px;top:130px;width:2px;height:521px;background:#fff"></div>
<div class="a" style="left:950px;top:130px;width:1px;height:521px;background:#e2e2e2"></div>
<svg style="left:958.5px;top:136.5px" width="10" height="10" viewBox="0 0 10 10"><path d="M0.6 0.6 L9.4 9.4 M9.4 0.6 L0.6 9.4" stroke="#a8a8a8" stroke-width="1.5"/></svg>
<div class="a" style="left:952px;top:152px;width:21.5px;height:103.5px;background:#dcdcdc"></div>
<div class="a" style="left:952px;top:255.5px;width:21.5px;height:89px;background:#c2c2c2"></div>
<div class="a" style="left:952px;top:344.5px;width:21.5px;height:76px;background:#dcdcdc"></div>
<svg style="left:954px;top:156px" width="17" height="16" viewBox="0 0 17 16"><rect x="6" y="4" width="10.5" height="11.5" fill="#7f86a8"/><rect x="8.5" y="6.5" width="5.5" height="6.5" fill="#b9bedb"/><path d="M6 4 L8.5 6.5 M16.5 4 L14 6.5 M6 15.5 L8.5 13 M16.5 15.5 L14 13" stroke="#555a80" stroke-width="0.8"/><path d="M0.6 6 L5 1.2 L9.2 6 L5 10.8Z" fill="#f3dc8a" stroke="#9a8440" stroke-width="0.8"/></svg>
<div class="t dk" style="left:954px;top:177px">对象属性</div>
<svg style="left:955px;top:259px" width="16" height="16" viewBox="0 0 16 16"><path d="M2.5 0 V16 M0 3.5 H16" stroke="#9a9a9a" stroke-width="1" stroke-dasharray="1.2 1.2"/></svg>
<div class="t dk" style="left:954px;top:281.5px">辅助线</div>
<svg style="left:953.5px;top:349.5px" width="19" height="18" viewBox="0 0 19 18"><path d="M1 1.6 L9.6 6.8 L6.4 8.4 L9 14.6 L7 15.6 L4.4 9.6 L1.6 11.8Z" fill="#fff" stroke="#6a6a6a" stroke-width="1" stroke-linejoin="round"/><text x="0" y="0" font-size="8.5" font-weight="bold" fill="#333" font-family="Liberation Sans, sans-serif" transform="translate(11.2 1.6) rotate(90)">?</text><rect x="12.4" y="11.2" width="1.6" height="1.6" fill="#333"/></svg>
<div class="t dk" style="left:954px;top:370.5px">提示</div>
<svg style="left:953.5px;top:441.5px" width="18" height="18" viewBox="0 0 18 18"><circle cx="9" cy="9" r="7.8" fill="none" stroke="#bdbdbd" stroke-width="1.2"/><path d="M4.5 9 H13.5 M9 4.5 V13.5" stroke="#bdbdbd" stroke-width="1.7"/></svg>
<!-- palette -->
<div class="a" style="left:974px;top:130px;width:19px;height:62px;background:#f7f7f7"></div>
<div class="a" style="left:976.5px;top:135.5px;width:13px;height:1px;background-image:repeating-linear-gradient(90deg,#9a9a9a 0,#9a9a9a 1.3px,transparent 1.3px,transparent 3.2px)"></div>
<svg style="left:980.5px;top:143px" width="6" height="9" viewBox="0 0 6 9"><path d="M0 0 L5.6 4.5 L0 9Z" fill="#111"/></svg>
<svg style="left:976px;top:157.5px" width="14" height="13" viewBox="0 0 14 13"><path d="M1 12 L7.5 5.5" stroke="#b9b9b9" stroke-width="2.2"/><path d="M6.6 3 L11 7.4 M8.2 5.8 L12.6 1.4" stroke="#b0b0b0" stroke-width="2.6"/></svg>
<svg style="left:979px;top:177.5px" width="10" height="7" viewBox="0 0 10 7"><path d="M0.6 6 L5 1.4 L9.4 6" fill="none" stroke="#c9c9c9" stroke-width="1.6"/></svg>
<svg style="left:974px;top:192.0px" width="20" height="19" viewBox="0 0 20 19"><rect x="0.5" y="0.5" width="19" height="18" fill="#fff" stroke="#555" stroke-width="1"/><path d="M0.5 0.5 L19.5 18.5 M19.5 0.5 L0.5 18.5" stroke="#444" stroke-width="0.9"/></svg>
<div class="a" style="left:974.5px;top:210.88px;width:19px;height:18.88px;background:#000000;box-sizing:border-box;border-top:1px solid rgba(255,255,255,0.12);"></div>
<div class="a" style="left:974.5px;top:229.76px;width:19px;height:18.88px;background:#1a1a1a;box-sizing:border-box;border-top:1px solid rgba(255,255,255,0.12);"></div>
<div class="a" style="left:974.5px;top:248.64px;width:19px;height:18.88px;background:#333333;box-sizing:border-box;border-top:1px solid rgba(255,255,255,0.12);"></div>
<div class="a" style="left:974.5px;top:267.52px;width:19px;height:18.88px;background:#4d4d4d;box-sizing:border-box;border-top:1px solid rgba(255,255,255,0.12);"></div>
<div class="a" style="left:974.5px;top:286.40px;width:19px;height:18.88px;background:#666666;box-sizing:border-box;border-top:1px solid rgba(40,40,50,0.35);"></div>
<div class="a" style="left:974.5px;top:305.28px;width:19px;height:18.88px;background:#808080;box-sizing:border-box;border-top:1px solid rgba(40,40,50,0.35);"></div>
<div class="a" style="left:974.5px;top:324.16px;width:19px;height:18.88px;background:#999999;box-sizing:border-box;border-top:1px solid rgba(40,40,50,0.35);"></div>
<div class="a" style="left:974.5px;top:343.04px;width:19px;height:18.88px;background:#b3b3b3;box-sizing:border-box;border-top:1px solid rgba(40,40,50,0.35);"></div>
<div class="a" style="left:974.5px;top:361.92px;width:19px;height:18.88px;background:#cccccc;box-sizing:border-box;border-top:1px solid rgba(40,40,50,0.35);"></div>
<div class="a" style="left:974.5px;top:380.80px;width:19px;height:18.88px;background:#e6e6e6;box-sizing:border-box;border-top:1px solid rgba(40,40,50,0.35);"></div>
<div class="a" style="left:974.5px;top:399.68px;width:19px;height:18.88px;background:#ffffff;box-sizing:border-box;border-top:1px solid rgba(40,40,50,0.35);"></div>
<div class="a" style="left:974.5px;top:418.56px;width:19px;height:18.88px;background:#0000ff;box-sizing:border-box;border-top:1px solid rgba(40,40,50,0.35);"></div>
<div class="a" style="left:974.5px;top:437.44px;width:19px;height:18.88px;background:#00ffff;box-sizing:border-box;border-top:1px solid rgba(40,40,50,0.35);"></div>
<div class="a" style="left:974.5px;top:456.32px;width:19px;height:18.88px;background:#00ff00;box-sizing:border-box;border-top:1px solid rgba(40,40,50,0.35);"></div>
<div class="a" style="left:974.5px;top:475.20px;width:19px;height:18.88px;background:#ffff00;box-sizing:border-box;border-top:1px solid rgba(40,40,50,0.35);"></div>
<div class="a" style="left:974.5px;top:494.08px;width:19px;height:18.88px;background:#ff0000;box-sizing:border-box;border-top:1px solid rgba(40,40,50,0.35);"></div>
<div class="a" style="left:974.5px;top:512.96px;width:19px;height:18.88px;background:#ff00ff;box-sizing:border-box;border-top:1px solid rgba(40,40,50,0.35);"></div>
<div class="a" style="left:974.5px;top:531.84px;width:19px;height:18.88px;background:#9900cc;box-sizing:border-box;border-top:1px solid rgba(40,40,50,0.35);"></div>
<div class="a" style="left:974.5px;top:550.72px;width:19px;height:18.88px;background:#ff6600;box-sizing:border-box;border-top:1px solid rgba(40,40,50,0.35);"></div>
<div class="a" style="left:974.5px;top:569.60px;width:19px;height:18.88px;background:#ff99cc;box-sizing:border-box;border-top:1px solid rgba(40,40,50,0.35);"></div>
<div class="a" style="left:974.5px;top:588.48px;width:19px;height:18.88px;background:#663333;box-sizing:border-box;border-top:1px solid rgba(40,40,50,0.35);"></div>
<div class="a" style="left:974.5px;top:607.36px;width:19px;height:18.88px;background:#ccccff;box-sizing:border-box;border-top:1px solid rgba(40,40,50,0.35);"></div>
<div class="a" style="left:974.5px;top:626.24px;width:19px;height:18.88px;background:#9999ff;box-sizing:border-box;border-top:1px solid rgba(40,40,50,0.35);"></div>
<div class="a" style="left:974.5px;top:645.12px;width:19px;height:18.88px;background:#6699ff;box-sizing:border-box;border-top:1px solid rgba(40,40,50,0.35);"></div>
<div class="a" style="left:974px;top:211px;width:0.8px;height:440px;background:rgba(60,60,70,0.55)"></div>
<div class="a" style="left:993px;top:211px;width:0.8px;height:440px;background:rgba(60,60,70,0.55)"></div>
<div class="a" style="left:974px;top:285.90px;width:19.6px;height:19.88px;border:1px solid #fff;box-sizing:border-box"></div>
<!-- drawing -->
<svg style="left:340px;top:280px" width="240" height="245" viewBox="340 280 240 245">
<defs>
<linearGradient id="yf" x1="353.5" y1="0" x2="564" y2="0" gradientUnits="userSpaceOnUse">
<stop offset="0" stop-color="#f6e04a"/>
<stop offset="0.045" stop-color="#f6e04a"/>
<stop offset="0.062" stop-color="#fbf0a0"/>
<stop offset="0.078" stop-color="#f6df45"/>
<stop offset="0.16" stop-color="#f5dc38"/>
<stop offset="0.207" stop-color="#f4d926"/>
<stop offset="0.254" stop-color="#f5dc36"/>
<stop offset="0.297" stop-color="#f6e050"/>
<stop offset="0.311" stop-color="#faed98"/>
<stop offset="0.328" stop-color="#f8e56a"/>
<stop offset="0.38" stop-color="#f7e462"/>
<stop offset="0.4" stop-color="#fdf6cc"/>
<stop offset="0.422" stop-color="#fae98a"/>
<stop offset="0.473" stop-color="#faee9c"/>
<stop offset="0.515" stop-color="#fdf6d0"/>
<stop offset="0.553" stop-color="#fffcec"/>
<stop offset="0.59" stop-color="#fdf7d4"/>
<stop offset="0.61" stop-color="#fcf3bc"/>
<stop offset="0.639" stop-color="#fffdf2"/>
<stop offset="0.653" stop-color="#f9e980"/>
<stop offset="0.68" stop-color="#f6e04c"/>
<stop offset="0.715" stop-color="#f5dc38"/>
<stop offset="0.82" stop-color="#f5dc38"/>
<stop offset="0.834" stop-color="#f9ea8c"/>
<stop offset="0.85" stop-color="#f6e04c"/>
<stop offset="0.903" stop-color="#f6e04c"/>
<stop offset="0.914" stop-color="#f8e672"/>
<stop offset="0.924" stop-color="#f5dd3e"/>
<stop offset="1" stop-color="#f5dd3e"/>
</linearGradient>
<linearGradient id="wv" x1="0" y1="293" x2="0" y2="512" gradientUnits="userSpaceOnUse"><stop offset="0" stop-color="#fffbe4" stop-opacity="0.7"/><stop offset="0.4" stop-color="#fffbe4" stop-opacity="0.4"/><stop offset="0.7" stop-color="#fffbe4" stop-opacity="0.05"/><stop offset="1" stop-color="#f5dc3a" stop-opacity="0.25"/></linearGradient>
<linearGradient id="wh" x1="418" y1="0" x2="496" y2="0" gradientUnits="userSpaceOnUse"><stop offset="0" stop-color="#fff" stop-opacity="0"/><stop offset="0.12" stop-color="#fff" stop-opacity="1"/><stop offset="0.88" stop-color="#fff" stop-opacity="1"/><stop offset="1" stop-color="#fff" stop-opacity="0"/></linearGradient>
<mask id="mk" maskUnits="userSpaceOnUse" x="340" y="280" width="240" height="245"><rect x="418" y="290" width="78" height="225" fill="url(#wh)"/></mask>
<clipPath id="cp"><rect x="353.5" y="293" width="210.5" height="219.5" rx="63" ry="63"/></clipPath>
<filter id="bl" x="-20%" y="-5%" width="140%" height="110%"><feGaussianBlur stdDeviation="1.6 3"/></filter>
</defs>
<rect x="353.5" y="293" width="210.5" height="219.5" rx="63" ry="63" fill="url(#yf)"/>
<g clip-path="url(#cp)"><rect x="418" y="293" width="78" height="220" fill="url(#wv)" mask="url(#mk)"/></g>
<g clip-path="url(#cp)" filter="url(#bl)" opacity="0.7">
<path d="M437 293 L441 293 L442.5 512 L434 512Z" fill="#fffdf0"/>
<path d="M462 293 L474 293 L470 420 L465 512 L463 512Z" fill="#fffdf2"/>
<path d="M487 293 L490 293 L493 512 L489 512Z" fill="#fffdf2"/>
<path d="M372 300 L378 300 L374 512 L370 512Z" fill="#faeea0"/>
<path d="M383 430 L387 430 L387 512 L383 512Z" fill="#faeea0"/>
<path d="M532 293 L541 293 L531 512 L527 512Z" fill="#faeea0"/>
</g>
<rect x="353.5" y="293" width="210.5" height="219.5" rx="63" ry="63" fill="none" stroke="#f3da34" stroke-width="1"/>
<rect x="353.5" y="293" width="210.5" height="219.5" rx="63" ry="63" fill="none" stroke="#1a1a1a" stroke-width="1.2" stroke-dasharray="3 2.2"/>
<g fill="#14146e" stroke="#0a0a2a" stroke-width="1">
<rect x="412.8" y="289.8" width="7.4" height="6.4"/><rect x="496.8" y="289.8" width="7.4" height="6.4"/>
<rect x="412.8" y="509.3" width="7.4" height="6.4"/><rect x="496.8" y="509.3" width="7.4" height="6.4"/>
<rect x="350" y="352.5" width="7" height="6.6"/><rect x="350" y="446" width="7" height="6.6"/>
<rect x="560.5" y="352.5" width="7" height="6.6"/><rect x="560.5" y="446" width="7" height="6.6"/>
</g>
</svg>
<!-- annotations -->
<svg style="left:0;top:190px" width="150" height="16" viewBox="0 190 150 16"><path d="M-2 196.2 C12 196 24 196.2 34 197.4 C44 198.6 52 200 62 200.4 C70 200.7 76 200.3 84 200.2 L144.6 200.2" fill="none" stroke="#d6272f" stroke-width="3" stroke-linecap="round"/></svg>
<svg style="left:220px;top:388px" width="140" height="24" viewBox="220 388 140 24"><path d="M228 402.6 L322 402.9" fill="none" stroke="#e0222c" stroke-width="2" stroke-linecap="round"/><path d="M324 394.3 L340 396.6 L355.6 398.9 L338 403.2 L322 406 L317.4 403.4 L326 401.6 L343 398.9 L332 397.4 L323.6 395.3Z" fill="#e0222c" stroke="#e0222c" stroke-width="0.9" stroke-linejoin="round"/><path d="M322 404.2 L350 399.2" stroke="#e0222c" stroke-width="2.4" stroke-linecap="round"/></svg>
</body></html>
